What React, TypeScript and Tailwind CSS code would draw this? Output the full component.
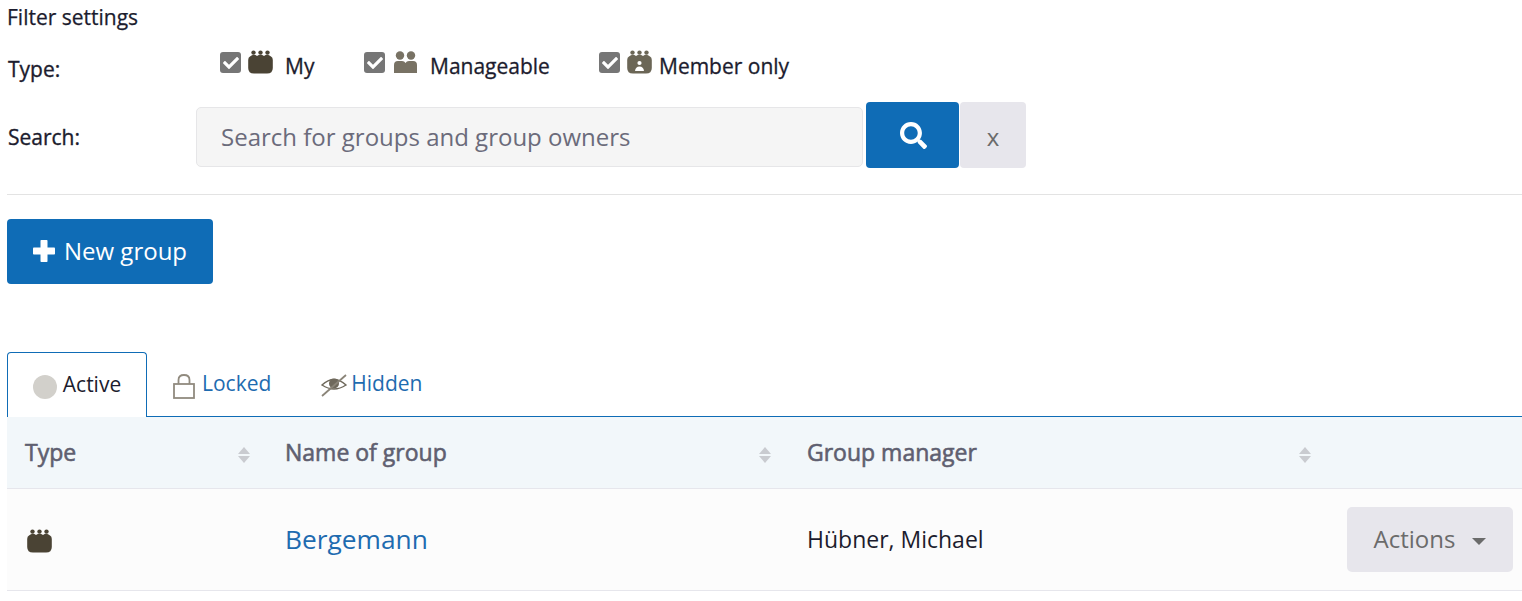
import { FaCheck, FaSearch } from "react-icons/fa";

function GroupBody() {
  return (
    <>
      <circle cx="5.5" cy="2.6" r="2.2" />
      <circle cx="12.5" cy="2.6" r="2.2" />
      <circle cx="19.5" cy="2.6" r="2.2" />
      <path d="M2 6.5 Q5.5 3.5 9 6 Q12.5 3.5 16 6 Q19.5 3.5 23 6.5 Q24.8 7 24.8 10 V18 Q24.8 23.6 19 23.6 H6 Q0.2 23.6 0.2 18 V10 Q0.2 7 2 6.5 Z" />
    </>
  );
}

function MyIcon({ className }: { className?: string }) {
  return (
    <svg viewBox="0 0 25 24" className={className} fill="#4a4334" aria-hidden="true">
      <GroupBody />
    </svg>
  );
}

function ManageIcon() {
  return (
    <svg viewBox="0 0 25 24" className="h-6 w-[25px]" fill="#787264" aria-hidden="true">
      <circle cx="7" cy="5.5" r="4.2" />
      <circle cx="18" cy="5.5" r="4.2" />
      <path d="M1 23 V15 Q1 11 5 11 H9 Q11.5 11 12.5 13 Q13.5 11 16 11 H20 Q24 11 24 15 V23 Z" />
    </svg>
  );
}

function MemberIcon() {
  return (
    <svg viewBox="0 0 25 24" className="h-6 w-[25px]" aria-hidden="true">
      <g fill="#6b6656">
        <GroupBody />
      </g>
      <g fill="#ffffff">
        <circle cx="12.5" cy="13" r="2.1" />
        <path d="M8 21 Q8.5 16.5 12.5 16.5 Q16.5 16.5 17 21 Z" />
      </g>
    </svg>
  );
}

function Tick() {
  return (
    <span className="flex h-[21px] w-[21px] items-center justify-center rounded-[3px] bg-[#767676]">
      <FaCheck size={16} color="#ffffff" />
    </span>
  );
}

function SortArrows() {
  return (
    <svg viewBox="0 0 12 16" className="h-4 w-3" fill="#c9cbd0" aria-hidden="true">
      <path d="M6 0 L12 7 H0 Z" />
      <path d="M0 9 H12 L6 16 Z" />
    </svg>
  );
}

export default function App() {
  return (
    <div className="h-[601px] w-full overflow-hidden bg-white pl-[7px] font-['Open_Sans','Noto_Sans',sans-serif] text-[#1c1c2e]">
      <div className="pt-[3px] text-[21px] leading-[28px] [-webkit-text-stroke:0.25px]">Filter settings</div>

      <div className="mt-[19px] flex h-[50px] items-start">
        <div className="w-[213px] pl-px pt-[5px] text-[21px] leading-[28px] [-webkit-text-stroke:0.35px]">Type:</div>
        <div className="flex items-start pt-[2px] text-[21px] leading-[28px] [-webkit-text-stroke:0.3px]">
          <div className="flex w-[144px] items-start">
            <Tick />
            <MyIcon className="ml-[7px] -mt-[2px] h-6 w-[25px]" />
            <span className="ml-3">My</span>
          </div>
          <div className="flex w-[235px] items-start">
            <Tick />
            <span className="ml-2 -mt-[2px]"><ManageIcon /></span>
            <span className="ml-3">Manageable</span>
          </div>
          <div className="flex items-start">
            <Tick />
            <span className="ml-[7px] -mt-[2px]"><MemberIcon /></span>
            <span className="ml-[7px]">Member only</span>
          </div>
        </div>
      </div>

      <div className="mt-[2px] flex h-[66px] items-center">
        <div className="mt-[5px] w-[189px] pl-px text-[21px] [-webkit-text-stroke:0.35px]">Search:</div>
        <div className="mt-1 flex h-[60px] w-[667px] items-center rounded-[5px] border border-[#e6e6e8] bg-[#f5f5f5] px-6 text-[24px] text-[#6b6b7b]">
          Search for groups and group owners
        </div>
        <button className="ml-[3px] flex h-[66px] w-[93px] items-center justify-center rounded-[4px] bg-[#0f6cb6] pl-px">
          <FaSearch size={27} color="#ffffff" />
        </button>
        <button className="ml-px h-[66px] w-[66px] rounded-[4px] bg-[#e7e6ec] pt-1 text-[24px] text-[#6b6b6b]">x</button>
      </div>

      <div className="mt-[26px] border-t border-[#e3e3e3]" />

      <button className="mt-6 flex h-[65px] w-[206px] items-center justify-center rounded-[4px] bg-[#0f6cb6] pb-[2px] text-[24px] text-white">
        <svg viewBox="0 0 22 22" className="mr-[9px] mt-px h-[22px] w-[22px]" fill="#ffffff" aria-hidden="true">
          <rect x="7.5" y="0" width="7" height="22" rx="0.8" />
          <rect x="0" y="7.5" width="22" height="7" rx="0.8" />
        </svg>
        New group
      </button>

      <div className="mt-[68px] flex h-[65px] items-stretch border-b border-[#0f6cb6] text-[21px]">
        <div className="-mb-px flex w-[140px] items-center justify-center rounded-t-[4px] border border-b-0 border-[#0f6cb6] bg-white">
          <span className="mr-[6px] mt-1 h-6 w-6 rounded-full bg-[#d2d0cb]" />
          <span>Active</span>
        </div>
        <div className="ml-[26px] flex items-center text-[#1e6bb0]">
          <svg viewBox="0 0 22 26" className="mr-[7px] mt-[3px] h-[26px] w-[22px]" fill="none" stroke="#918b7f" strokeWidth="1.8" aria-hidden="true">
            <rect x="1" y="11" width="20" height="14" />
            <path d="M5.5 11 V7 Q5.5 2 11 2 Q16.5 2 16.5 7 V11" />
          </svg>
          <span className="-mt-px">Locked</span>
        </div>
        <div className="ml-[50px] flex items-center text-[#1e6bb0]">
          <svg viewBox="0 0 26 24" className="mr-[4px] mt-px h-6 w-[26px]" aria-hidden="true">
            <path d="M1 12 Q13 1 25 12 Q13 20 1 12 Z" fill="#ffffff" stroke="#6f695c" strokeWidth="1.5" />
            <circle cx="13" cy="10.5" r="5" fill="#6f695c" />
            <path d="M1 23 L25 2" stroke="#8a8478" strokeWidth="1.8" />
          </svg>
          <span className="-mt-px">Hidden</span>
        </div>
      </div>

      <div className="grid h-[72px] grid-cols-[260px_522px_540px_1fr] items-center border-b border-[#e6e6ec] bg-[#f2f7fa] text-[23px] text-[#5f5f70] [-webkit-text-stroke:0.6px]">
        <div className="flex items-center justify-between pl-[18px] pr-[17px]">
          <span>Type</span>
          <span className="mt-1"><SortArrows /></span>
        </div>
        <div className="flex items-center justify-between pl-[18px] pr-[18px]">
          <span>Name of group</span>
          <span className="mt-1"><SortArrows /></span>
        </div>
        <div className="flex items-center justify-between pl-[18px] pr-[18px]">
          <span>Group manager</span>
          <span className="mt-1"><SortArrows /></span>
        </div>
        <div />
      </div>

      <div className="grid h-[102px] grid-cols-[260px_522px_1fr_auto] items-center border-b border-[#e6e6ec] bg-[#fcfcfc]">
        <div className="pl-5 pt-[3px]">
          <MyIcon className="h-6 w-[25px]" />
        </div>
        <div className="pl-[18px] text-[26.3px] text-[#1e6bb0]">Bergemann</div>
        <div className="pl-[18px] text-[23px]">Hübner, Michael</div>
        <button className="mr-[9px] flex h-[65px] w-[166px] items-center justify-center rounded-[5px] bg-[#e7e6ec] pb-[2px] text-[24px] text-[#6b6b6b]">
          Actions
          <span className="ml-[17px] mt-[5px] h-0 w-0 border-x-[7px] border-t-[7px] border-x-transparent border-t-[#6b6b6b]" />
        </button>
      </div>
    </div>
  );
}
